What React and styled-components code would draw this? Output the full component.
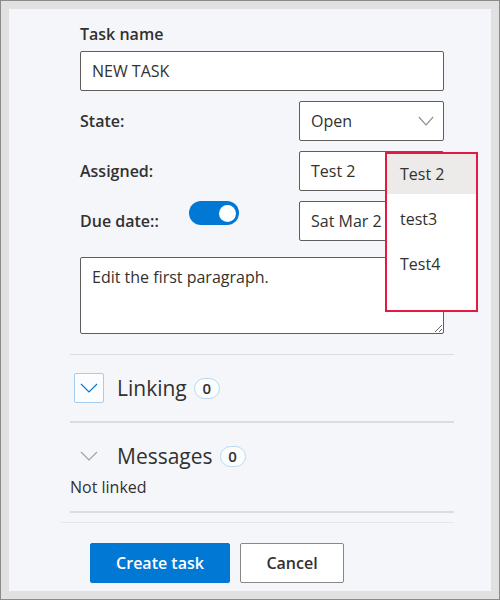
import React from 'react';
import styled, { createGlobalStyle } from 'styled-components';

const GlobalStyle = createGlobalStyle`
    html, body {
        margin: 0;
        padding: 0;
        background: #e1e1e1;
    }
    * {
        box-sizing: border-box;
    }
`;

const font = `"Open Sans", "Noto Sans", "Liberation Sans", sans-serif`;

const Frame = styled.div`
    width: 500px;
    height: 600px;
    border: 1px solid #8b8b8b;
    background: #e1e1e1;
    padding: 8px;
    font-family: ${font};
    color: #323130;
`;

const Panel = styled.div`
    height: 100%;
    background: #f5f6fa;
    padding: 14px 37px 0 52px;
    display: flex;
    flex-direction: column;
    overflow: hidden;
`;

const Form = styled.div`
    display: flex;
    flex-direction: column;
    margin: 0 10px 0 19px;
`;

const FieldLabel = styled.label`
    font-size: 16px;
    font-weight: 600;
    line-height: 22px;
    margin-bottom: 6px;
`;

const TextInput = styled.input`
    height: 40px;
    border: 1px solid #605e5c;
    border-radius: 2px;
    background: #fff;
    padding: 0 11px;
    font: 16px ${font};
    color: #323130;
    outline: none;
`;

const Row = styled.div`
    display: flex;
    align-items: center;
    height: 40px;
    margin-top: 10px;
`;

const RowLabel = styled.div`
    width: ${p => p.width || 'auto'};
    font-size: 16px;
    font-weight: 600;
    line-height: 22px;
`;

const FieldBox = styled.div`
    position: relative;
    margin-left: auto;
    width: 145px;
    height: 40px;
`;

const Field = styled.div`
    display: flex;
    align-items: center;
    height: 100%;
    border: 1px solid #605e5c;
    border-radius: 2px;
    background: #fff;
    padding: 0 9px 0 11px;
    font-size: 16px;
    white-space: nowrap;

    span {
        flex: 1;
    }
`;

const Toggle = styled.div`
    align-self: flex-start;
    width: 50px;
    height: 24px;
    border-radius: 12px;
    background: #0078d4;
    display: flex;
    align-items: center;
    justify-content: flex-end;
    padding-right: 3px;

    &::after {
        content: '';
        width: 17px;
        height: 17px;
        border-radius: 50%;
        background: #fff;
    }
`;

const Popup = styled.div`
    position: absolute;
    left: 86px;
    top: 1px;
    width: 93px;
    height: 160px;
    border: 2px solid #e31b43;
    background: #fff;
    z-index: 2;
`;

const PopupItem = styled.div`
    height: 40px;
    margin-bottom: 5px;
    display: flex;
    align-items: center;
    padding-left: 13px;
    font-size: 16px;
    background: ${p => (p.selected ? '#edebe9' : 'transparent')};
`;

const TextArea = styled.textarea`
    margin-top: 16px;
    height: 77px;
    border: 1px solid #605e5c;
    border-radius: 2px;
    background: #fff;
    padding: 8px 11px;
    font: 16px/22px ${font};
    color: #323130;
    outline: none;
`;

const Sections = styled.div`
    margin: 20px 0 0 9px;
    display: flex;
    flex-direction: column;
`;

const Divider = styled.div`
    height: ${p => p.thick ? 2 : 1}px;
    background: ${p => p.light ? '#e6e7ea' : '#dcdcdc'};
`;

const SectionHeader = styled.div`
    display: flex;
    align-items: center;
    padding: 18px 0 ${p => p.bottom}px 4px;
`;

const ChevronBox = styled.div`
    width: 30px;
    height: 30px;
    display: flex;
    align-items: center;
    justify-content: center;
    border: 1px solid ${p => p.active ? '#a6cdf0' : 'transparent'};
    background: ${p => p.active ? '#fbfdff' : 'transparent'};
    border-radius: 2px;
`;

const SectionTitle = styled.div`
    margin-left: 13px;
    font-size: 21px;
    line-height: 28px;
`;

const Badge = styled.div`
    margin-left: 7px;
    min-width: 26px;
    height: 21px;
    padding: 0 7px;
    border: 1px solid #b9d8f2;
    border-radius: 11px;
    background: #fbfdff;
    display: flex;
    align-items: center;
    justify-content: center;
    font-size: 15px;
    font-weight: 600;
`;

const Empty = styled.div`
    font-size: 16px;
    line-height: 22px;
    padding: 5px 0 13px;
`;

const ButtonBar = styled.div`
    display: flex;
    gap: 10px;
    margin: 20px 0 0 29px;
`;

const Button = styled.button`
    height: 40px;
    width: ${p => p.width}px;
    border-radius: 2px;
    border: 1px solid ${p => p.primary ? '#0078d4' : '#8a8886'};
    background: ${p => p.primary ? '#0078d4' : '#fff'};
    color: ${p => p.primary ? '#fff' : '#323130'};
    font: 600 16px ${font};
    padding: 0;
`;

const Chevron = ({ color, width = 18 }) => (
    <svg width={width} height="10" viewBox="0 0 18 10" fill="none" preserveAspectRatio="none">
        <path d="M1 1 L9 9 L17 1" stroke={color} strokeWidth="1.1" />
    </svg>
);

export default function App() {
    return (
        <>
            <GlobalStyle />
            <Frame>
                <Panel>
                    <Form>
                        <FieldLabel>Task name</FieldLabel>
                        <TextInput defaultValue="NEW TASK" />

                        <Row>
                            <RowLabel>State:</RowLabel>
                            <FieldBox>
                                <Field>
                                    <span>Open</span>
                                    <Chevron color="#8a8886" width={16} />
                                </Field>
                            </FieldBox>
                        </Row>

                        <Row>
                            <RowLabel>Assigned:</RowLabel>
                            <FieldBox>
                                <Field><span>Test 2</span></Field>
                                <Popup>
                                    <PopupItem selected>Test 2</PopupItem>
                                    <PopupItem>test3</PopupItem>
                                    <PopupItem>Test4</PopupItem>
                                </Popup>
                            </FieldBox>
                        </Row>

                        <Row>
                            <RowLabel width="109px">Due date::</RowLabel>
                            <Toggle />
                            <FieldBox>
                                {/* the popup hides the rest of the date */}
                                <Field><span>Sat Mar 2</span></Field>
                            </FieldBox>
                        </Row>

                        <TextArea readOnly value="Edit the first paragraph." />
                    </Form>

                    <Sections>
                        <Divider />
                        <SectionHeader bottom={18}>
                            <ChevronBox active>
                                <Chevron color="#0078d4" />
                            </ChevronBox>
                            <SectionTitle>Linking</SectionTitle>
                            <Badge>0</Badge>
                        </SectionHeader>
                        <Divider thick />
                        <SectionHeader bottom={0}>
                            <ChevronBox>
                                <Chevron color="#a19f9d" />
                            </ChevronBox>
                            <SectionTitle>Messages</SectionTitle>
                            <Badge>0</Badge>
                        </SectionHeader>
                        <Empty>Not linked</Empty>
                        <Divider thick />
                    </Sections>

                    <Divider light style={{ marginTop: 9 }} />

                    <ButtonBar>
                        <Button primary width={140}>Create task</Button>
                        <Button width={104}>Cancel</Button>
                    </ButtonBar>
                </Panel>
            </Frame>
        </>
    );
}
